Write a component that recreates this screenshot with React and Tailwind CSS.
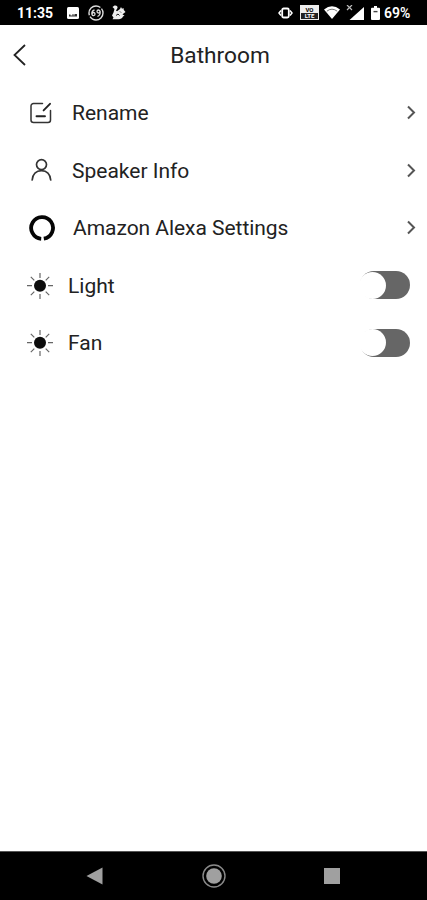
const menuItems = [
    { label: 'Rename', icon: <RenameIcon /> },
    { label: 'Speaker Info', icon: <PersonIcon /> },
    { label: 'Amazon Alexa Settings', icon: <AlexaIcon />, labelClass: 'pl-px tracking-[-0.04px]' },
];

const switches = ['Light', 'Fan'];

function RenameIcon() {
    return (
        <svg className="w-6 h-6" viewBox="0 0 24 24" fill="none" stroke="#333" strokeWidth="1.5" strokeLinecap="round">
            <path d="M13.5 2.6H4.5a2.5 2.5 0 0 0-2.5 2.5v14a2.5 2.5 0 0 0 2.5 2.5h14.5a2.5 2.5 0 0 0 2.5-2.5V9.5" />
            <path d="M21 2.8L14.6 9.4M7.5 15.2h8.5" stroke="#222" strokeWidth="1.9" />
        </svg>
    );
}

function PersonIcon() {
    return (
        <svg className="w-6 h-6" viewBox="0 0 24 24" fill="none" stroke="#333" strokeWidth="1.7" strokeLinecap="round">
            <circle cx="12.5" cy="6.6" r="5" />
            <path d="M3.2 22c.4-5.6 4-9.4 9.3-9.4s8.7 3.8 9.2 9.4" />
        </svg>
    );
}

function AlexaIcon() {
    return (
        <svg className="w-[26px] h-[26px] shrink-0 ml-0.5" viewBox="0 0 26 26" fill="none" stroke="#050505" strokeWidth="3.8">
            <path d="M12.200 23.800A10.900 10.900 0 1 1 14.800 23.700" />
        </svg>
    );
}

function SunIcon() {
    return (
        <svg className="w-[26px] h-[26px]" viewBox="0 0 26 26" stroke="#666" strokeWidth="1.2">
            <circle cx="13" cy="12.7" r="6" fill="#0d0d0d" stroke="none" />
            <path d="M13 0v5M13 21v5M0 12.7h5M21 12.7h5M3.800 3.800l3.500 3.500M18.700 18.700l3.500 3.500M22.200 3.800l-3.500 3.500M7.300 18.700l-3.500 3.500" />
        </svg>
    );
}

function Chevron() {
    return (
        <svg className="w-[9px] h-[15px]" viewBox="0 0 9 15" fill="none" stroke="#555" strokeWidth="2">
            <path d="M1 1.500L7 7.500L1 13.500" />
        </svg>
    );
}

function Toggle() {
    return (
        <button className="w-[50px] h-7 mb-px rounded-full bg-[#666] flex items-center justify-start">
            <span className="w-[27px] h-[27px] rounded-full bg-white -ml-px"></span>
        </button>
    );
}

function StatusBar() {
    return (
        <div className="h-[25px] shrink-0 bg-black text-white flex items-center pl-[17px] pr-4 text-[14px] font-bold">
            <span className="w-[50px] pt-px">11:35</span>
            <svg className="w-3 h-3" viewBox="0 0 12 12">
                <rect width="12" height="12" rx="1.5" fill="#fff" />
                <path d="M2 9.500V7.500h1.500v1h2V7h1v1.500h1V7H10v2.500z" fill="#333" />
            </svg>
            <svg className="w-4 h-4 ml-[9px]" viewBox="0 0 16 16" fill="none" stroke="#ddd">
                <circle cx="8" cy="8" r="7" strokeWidth="1.4" strokeDasharray="18 1.5" />
                <path d="M6.500 5C4 5.500 3.500 8 4 9.500s3 1.500 3-.5-2.500-2-3 0M12 6.500c0-2-3-2-3 0s3 2 3 0c.5 2-.5 4-2.500 5" strokeWidth="1.3" />
            </svg>
            <svg className="w-[15px] h-[15px] ml-[7px]" viewBox="0 0 15 15">
                <path d="M1.500 2l2-1.500c2-.5 3.500 1 3 2.500L5 5.500l1 .8 3-2.300 1-2 1 1.800L12.500 3l.3 2 1.700 2-2 1.500-1 1 2 1-1.500 1c-1 2.500-3 2.700-6 2.700H1.500l1-1.700L1 10.500l1.500-3L3.500 4z" fill="#eee" />
                <path d="M5 10.500l2-1.500 1.500 1.500M9 6.500l1 1" fill="none" stroke="#222" />
            </svg>
            <div className="flex items-center ml-auto">
                <svg className="w-[15px] h-3" viewBox="0 0 15 12" fill="none" stroke="#fff" strokeWidth="1.8">
                    <rect x="4.2" y="1.5" width="6.6" height="9" rx="1.5" />
                    <path d="M3 3.500L1 6l2 2.500M12 3.500L14 6l-2 2.500" strokeWidth="1.5" />
                </svg>
                <div className="w-[19px] h-[15px] ml-[7px] bg-[#eee] text-black text-[6px] leading-[7px] flex flex-col items-center justify-center">
                    <span className="h-[7px]">VO</span>
                    <span className="h-[6px] w-[17px] bg-[#222] text-white leading-[6px] text-center">LTE</span>
                </div>
                <svg className="w-4 h-[13px] ml-[5px]" viewBox="0 0 16 13">
                    <path d="M8 13L0 3.500Q8-3 16 3.500z" fill="#fff" />
                    <path d="M2.800 5.200Q8 1.200 13.200 5.200" fill="none" stroke="#555" strokeWidth=".8" />
                </svg>
                <svg className="w-[18px] h-4 ml-1.5" viewBox="0 0 18 16">
                    <path d="M18 2v13H3.500z" fill="#fff" />
                    <path d="M1 0l5 5M6 0L1 5" stroke="#bbb" strokeWidth="1.2" />
                </svg>
                <svg className="w-[9px] h-3.5 ml-[7px]" viewBox="0 0 9 15" preserveAspectRatio="none">
                    <path d="M3 0h3v2h2q1 0 1 1v11q0 1-1 1H1q-1 0-1-1V3q0-1 1-1h2z" fill="#fff" />
                    <path d="M2.500 6h4" stroke="#444" strokeWidth="1.5" />
                </svg>
                <span className="ml-1 w-[27px] pt-px text-[14px] font-semibold">69%</span>
            </div>
        </div>
    );
}

function NavBar() {
    return (
        <div className="h-[49px] shrink-0 bg-black flex items-center border-t border-[#555] pl-[86px] pr-[87px] justify-between">
            <svg className="w-[17px] h-[18px]" viewBox="0 0 17 18">
                <path d="M16.500 .5v17L.5 9z" fill="#a0a0a0" />
            </svg>
            <svg className="w-6 h-6" viewBox="0 0 24 24">
                <circle cx="12" cy="12" r="11" fill="none" stroke="#8a8a8a" strokeWidth="1.4" />
                <circle cx="12" cy="12" r="7.8" fill="#a0a0a0" />
            </svg>
            <div className="w-4 h-4 bg-[#a0a0a0]"></div>
        </div>
    );
}

export default function App() {
    return (
        <div className="w-full h-screen flex flex-col bg-white text-[#222] font-['Roboto',sans-serif] overflow-hidden">
            <StatusBar />
            <header className="h-[59px] shrink-0 grid grid-cols-[40px_1fr_40px] items-center">
                <svg className="w-3.5 h-[22px] ml-[13px]" viewBox="0 0 14 22" fill="none" stroke="#222" strokeWidth="1.8">
                    <path d="M12 1L1.500 11L12 21" />
                </svg>
                <h1 className="text-[22.7px] text-center pl-[13px] pt-[3px]">Bathroom</h1>
            </header>
            <main className="flex-1">
                {menuItems.map((item) => (
                    <div key={item.label} className="h-[57.6px] flex items-center pl-7 pr-[11px]">
                        <div className="w-[26px] mr-[18px] flex justify-center">{item.icon}</div>
                        <span className={`flex-1 pt-0.5 text-[21px] ${item.labelClass ?? ''}`}>{item.label}</span>
                        <Chevron />
                    </div>
                ))}
                {switches.map((label) => (
                    <div key={label} className="h-[57.6px] flex items-center pl-[27px] pr-[17px]">
                        <SunIcon />
                        <span className="flex-1 ml-[15px] pt-0.5 text-[21px]">{label}</span>
                        <Toggle />
                    </div>
                ))}
            </main>
            <NavBar />
        </div>
    );
}
